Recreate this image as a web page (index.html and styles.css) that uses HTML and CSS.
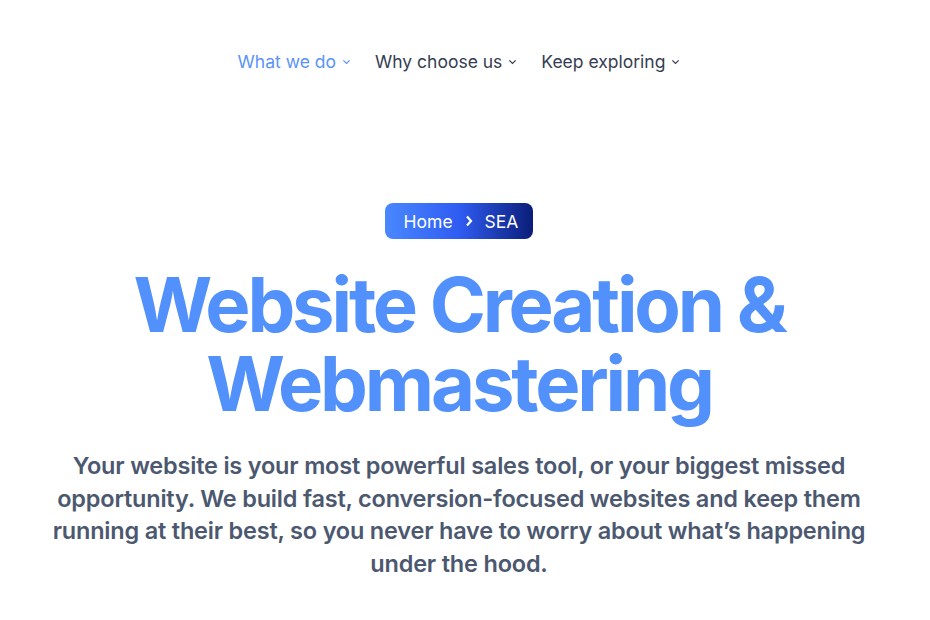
FILE: index.html
```html
<!DOCTYPE html>
<html lang="en">
  <head>
    <meta charset="UTF-8" />
    <meta name="viewport" content="width=device-width, initial-scale=1.0" />
    <title>Website Creation &amp; Webmastering</title>
    <link rel="stylesheet" href="styles.css">
  </head>
  <body>
    <!-- Top menu -->
    <nav class="menu">
      <a class="menu-item active" href="#">What we do
        <svg class="caret" viewBox="0 0 10 6"><path d="M1.5 1.2 5 4.6l3.5-3.4" /></svg>
      </a>
      <a class="menu-item" href="#">Why choose us
        <svg class="caret" viewBox="0 0 10 6"><path d="M1.5 1.2 5 4.6l3.5-3.4" /></svg>
      </a>
      <a class="menu-item" href="#">Keep exploring
        <svg class="caret" viewBox="0 0 10 6"><path d="M1.5 1.2 5 4.6l3.5-3.4" /></svg>
      </a>
    </nav>

    <!-- Hero -->
    <section class="hero">
      <div class="crumbs">
        <span>Home</span>
        <svg class="crumb-sep" viewBox="0 0 8 12"><path d="M2 1.5 6 6l-4 4.5" /></svg>
        <span>SEA</span>
      </div>

      <h1 class="title">Website Creation &amp;<br />Webmastering</h1>

      <p class="lead">
        Your website is your most powerful sales tool, or your biggest missed<br />
        opportunity. We build fast, conversion-focused websites and keep them<br />
        running at their best, so you never have to worry about what’s happening<br />
        under the hood.
      </p>
    </section>
  </body>
</html>
```

FILE: styles.css
```css
/* Base */
body {
  margin: 0;
  padding-right: 12px;
  background: #ffffff;
  font-family: Inter, "Noto Sans", sans-serif;
  color: #3a4154;
}

/* Top menu */
.menu {
  display: flex;
  justify-content: center;
  gap: 24px;
  padding-top: 49px;
  height: 24px;
}

.menu-item {
  display: flex;
  align-items: center;
  gap: 6px;
  font-size: 17.5px;
  color: #363d52;
  text-decoration: none;
}

.menu-item.active {
  color: #5b93f8;
}

.caret {
  width: 9px;
  height: 6px;
  fill: none;
  stroke: currentColor;
  stroke-width: 1.4;
  margin-top: 2px;
}

/* Hero */
.hero {
  display: flex;
  flex-direction: column;
  align-items: center;
  text-align: center;
  padding-top: 130px;
}

.crumbs {
  display: flex;
  align-items: center;
  gap: 12px;
  height: 36px;
  padding: 0 15px 0 19px;
  border-radius: 8px;
  background: linear-gradient(90deg, #4a88ff 0%, #2f5cf2 50%, #0b1d78 100%);
  color: #ffffff;
  font-size: 17.5px;
}

.crumb-sep {
  width: 8px;
  height: 12px;
  fill: none;
  stroke: #ffffff;
  stroke-width: 2.2;
}

.title {
  margin: 26px 0 0;
  font-size: 76px;
  line-height: 79px;
  font-weight: 700;
  letter-spacing: -3.2px;
  color: #5291fb;
}

.lead {
  margin: 27px 0 0;
  font-size: 23.5px;
  line-height: 32.5px;
  font-weight: 600;
  letter-spacing: -0.2px;
  color: #4b5870;
}
```
